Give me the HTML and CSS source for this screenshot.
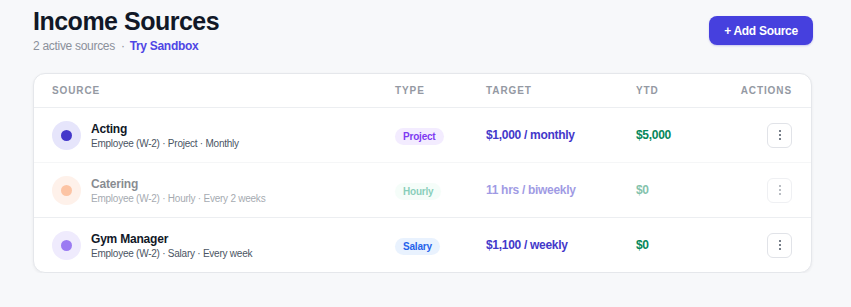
FILE: index.html
```html
<!DOCTYPE html>
<html>
<head>
<meta charset="utf-8">
<link rel="stylesheet" href="styles.css">
</head>
<body>
<div class="page">
  <header class="top">
    <div class="titles">
      <h1 class="title">Income Sources</h1>
      <div class="subtitle"><span>2 active sources</span><span class="sep">·</span><a class="link">Try Sandbox</a></div>
    </div>
    <button class="add-btn">+ Add Source</button>
  </header>

  <div class="card">
    <div class="row head">
      <div>Source</div>
      <div>Type</div>
      <div>Target</div>
      <div>YTD</div>
      <div class="right">Actions</div>
    </div>

    <div class="row">
      <div class="source">
        <span class="avatar av-indigo"><span class="dot"></span></span>
        <div class="meta">
          <div class="name">Acting</div>
          <div class="desc">Employee (W-2) · Project · Monthly</div>
        </div>
      </div>
      <div><span class="badge b-project">Project</span></div>
      <div class="target">$1,000 / monthly</div>
      <div class="ytd">$5,000</div>
      <div class="right"><button class="kebab"><span></span><span></span><span></span></button></div>
    </div>

    <div class="row faded">
      <div class="source">
        <span class="avatar av-orange"><span class="dot"></span></span>
        <div class="meta">
          <div class="name">Catering</div>
          <div class="desc">Employee (W-2) · Hourly · Every 2 weeks</div>
        </div>
      </div>
      <div><span class="badge b-hourly">Hourly</span></div>
      <div class="target">11 hrs / biweekly</div>
      <div class="ytd">$0</div>
      <div class="right"><button class="kebab"><span></span><span></span><span></span></button></div>
    </div>

    <div class="row">
      <div class="source">
        <span class="avatar av-violet"><span class="dot"></span></span>
        <div class="meta">
          <div class="name">Gym Manager</div>
          <div class="desc">Employee (W-2) · Salary · Every week</div>
        </div>
      </div>
      <div><span class="badge b-salary">Salary</span></div>
      <div class="target">$1,100 / weekly</div>
      <div class="ytd">$0</div>
      <div class="right"><button class="kebab"><span></span><span></span><span></span></button></div>
    </div>
  </div>
</div>
</body>
</html>
```

FILE: styles.css
```css
* { box-sizing: border-box; }
html, body { margin: 0; padding: 0; }
body {
  background: #f7f8fa;
  font-family: "Liberation Sans", Arial, sans-serif;
  color: #111827;
}
.page {
  width: 851px;
  padding: 5px 39px 0 33px;
}
.top {
  display: flex;
  justify-content: space-between;
  align-items: flex-start;
  margin-bottom: 20px;
}
.title {
  margin: 0;
  font-size: 25px;
  line-height: 32px;
  font-weight: 700;
  letter-spacing: -0.5px;
  color: #111827;
}
.subtitle {
  margin-top: 2px;
  font-size: 12px;
  line-height: 14px;
  letter-spacing: -0.3px;
  color: #8b909a;
  display: flex;
  align-items: center;
}
.sep { margin: 0 5px 0 6px; }
.link { color: #4f46e5; font-weight: 700; }
.add-btn {
  margin-top: 11px;
  margin-right: -1px;
  width: 104px;
  height: 29px;
  border: 0;
  border-radius: 8px;
  background: #4640de;
  color: #fff;
  font-family: inherit;
  font-size: 12px;
  font-weight: 700;
  letter-spacing: -0.3px;
  box-shadow: 0 1px 2px rgba(67, 56, 202, 0.25);
}
.card {
  background: #fff;
  border: 1px solid #e5e7eb;
  border-radius: 12px;
  box-shadow: 0 1px 3px rgba(17, 24, 39, 0.06);
  width: 779px;
}
.row {
  display: grid;
  grid-template-columns: 343px 91px 150px 1fr auto;
  align-items: center;
  padding: 0 19px 0 18px;
  height: 55px;
  border-top: 1px solid #eceef1;
}
.row.head {
  height: 33px;
  border-top: 0;
  font-size: 10px;
  font-weight: 700;
  letter-spacing: 0.9px;
  text-transform: uppercase;
  color: #9499a3;
}
.right { justify-self: end; }
.faded { opacity: 0.5; }
.source { display: flex; align-items: center; }
.avatar {
  width: 29px;
  height: 29px;
  border-radius: 50%;
  display: flex;
  align-items: center;
  justify-content: center;
  margin-right: 10px;
  flex: none;
}
.dot { width: 11px; height: 11px; border-radius: 50%; }
.av-indigo { background: #e6e5fb; }
.av-indigo .dot { background: #4338ca; }
.av-orange { background: #fee4d6; }
.av-orange .dot { background: #fb8a4c; }
.av-violet { background: #efebfd; }
.av-violet .dot { background: #9b7bf2; }
.meta { padding-top: 1px; }
.name {
  font-size: 12px;
  font-weight: 700;
  line-height: 15px;
  letter-spacing: -0.2px;
  color: #111827;
}
.desc {
  font-size: 10px;
  line-height: 13px;
  letter-spacing: -0.24px;
  color: #4b5563;
}
.badge {
  display: inline-block;
  font-size: 10px;
  font-weight: 700;
  line-height: 13px;
  letter-spacing: -0.2px;
  padding: 2px 8px;
  border-radius: 9px;
}
.b-project { background: #f3ecff; color: #7e3af2; }
.b-hourly { background: #ecfdf5; color: #0f9f77; }
.b-salary { background: #e9f2fe; color: #2563eb; }
.target { font-size: 12px; font-weight: 700; letter-spacing: -0.3px; color: #4338ca; }
.ytd { font-size: 12px; font-weight: 700; letter-spacing: -0.3px; color: #04875a; }
.kebab {
  width: 25px;
  height: 25px;
  border: 1px solid #e1e3e8;
  border-radius: 6px;
  background: #fff;
  display: flex;
  flex-direction: column;
  align-items: center;
  justify-content: center;
  gap: 2px;
  padding: 0;
}
.kebab span {
  width: 2px;
  height: 2px;
  background: #4b5563;
  border-radius: 1px;
}
```
